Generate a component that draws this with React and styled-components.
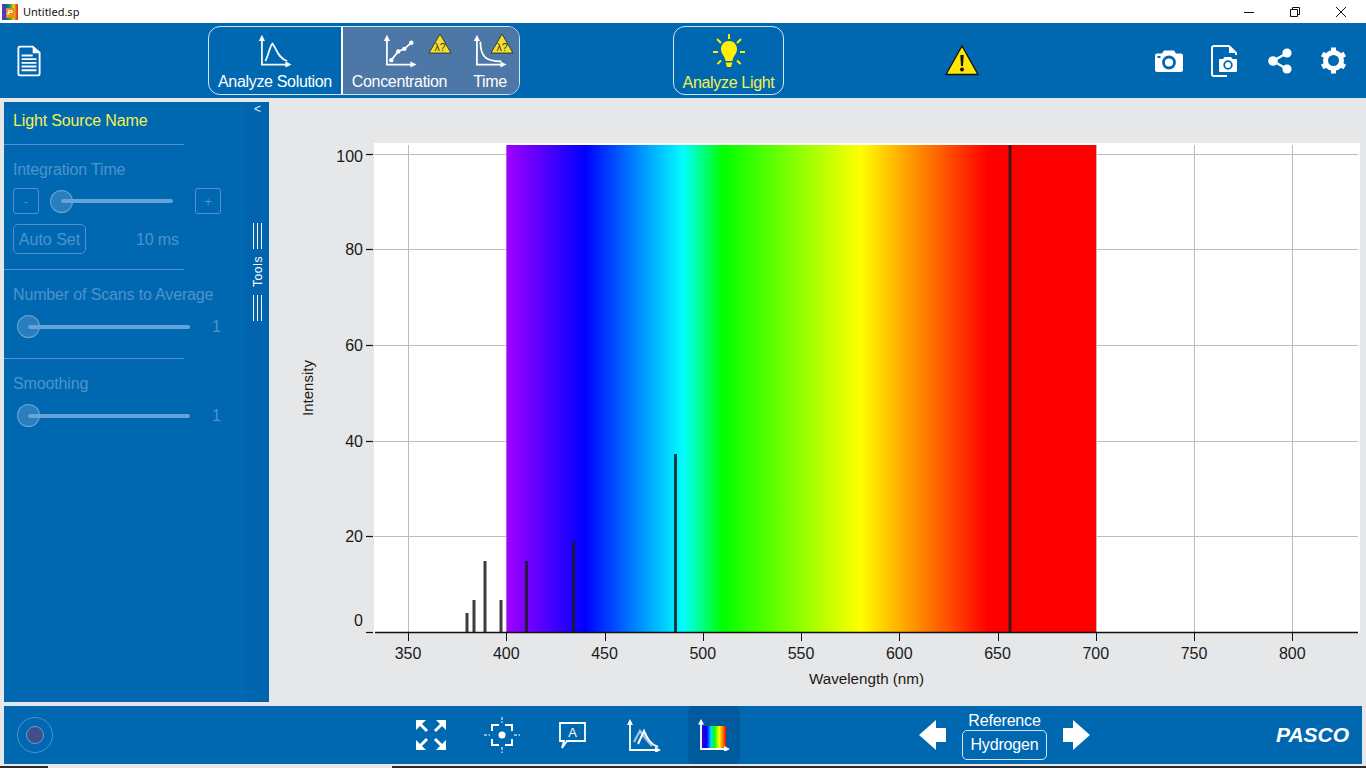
import styled, { createGlobalStyle } from "styled-components";

const BLUE = "#0067b1";
const DIM = "#4d94cc";
const FONT = `"Liberation Sans", Arial, sans-serif`;

const GlobalStyle = createGlobalStyle`
  html, body {
    margin: 0;
    height: 768px;
    overflow: hidden;
    background: #e6e7e8;
    font-family: ${FONT};
  }
`;

const Page = styled.div`
  width: 1366px;
  height: 768px;
  display: flex;
  flex-direction: column;
  overflow: hidden;
`;

/* window title bar */
const TitleBar = styled.div`
  height: 23px;
  flex: none;
  background: #fff;
  display: flex;
  align-items: center;
  padding-left: 2px;
`;
const AppIcon = styled.div`
  width: 16px;
  height: 16px;
  background: linear-gradient(90deg, #7a2fb0 0%, #2050c0 25%, #20a040 50%, #e8d020 72%, #e02020 100%);
  display: flex;
  align-items: center;
  justify-content: center;
`;
const AppIconLetter = styled.span`
  width: 8px;
  height: 10px;
  margin-top: 2px;
  background: #f08a10;
  color: #fff;
  font: italic bold 8px/10px ${FONT};
  text-align: center;
`;
const TitleText = styled.span`
  margin-left: 5px;
  font: 11px "Noto Sans", sans-serif;
  color: #111;
`;
const WindowControls = styled.div`
  margin-left: auto;
  margin-right: 2px;
  display: flex;
`;
const WindowButton = styled.div`
  width: 46px;
  height: 23px;
  display: flex;
  align-items: center;
  justify-content: center;
`;

/* top toolbar */
const TopBar = styled.div`
  height: 75px;
  flex: none;
  background: ${BLUE};
  display: flex;
  align-items: center;
  color: #fff;
`;
const DocButton = styled.div`
  width: 208px;
  padding-left: 17px;
  box-sizing: border-box;
  display: flex;
`;
const ModeGroup = styled.div`
  width: 312px;
  height: 69px;
  box-sizing: border-box;
  border: 1px solid #d5e4f1;
  border-radius: 12px;
  display: flex;
  overflow: hidden;
`;
const ModePart = styled.div`
  position: relative;
  display: flex;
  flex-direction: column;
  align-items: center;
  width: ${(p) => p.$w}px;
  padding-left: ${(p) => p.$pl || 0}px;
  box-sizing: border-box;
  flex: none;
  background: ${(p) => (p.$active ? "#4c77a6" : "transparent")};
`;
const ModeDivider = styled.div`
  width: 2px;
  flex: none;
  background: #fff;
`;
const ModeLabel = styled.span`
  font-size: 16px;
  letter-spacing: -0.33px;
  line-height: 18px;
  margin-top: ${(p) => p.$mt ?? 1}px;
  white-space: nowrap;
  color: ${(p) => p.$color || "#fff"};
`;
const ModeIcon = styled.div`
  height: 45px;
  box-sizing: border-box;
  padding-bottom: 4px;
  display: flex;
  align-items: flex-end;
`;
const BadgeSlot = styled.div`
  position: absolute;
  top: 6px;
  left: ${(p) => p.$left}px;
  display: flex;
`;
const LightButton = styled.div`
  margin-left: 153px;
  width: 111px;
  height: 69px;
  box-sizing: border-box;
  border: 1px solid #d5e4f1;
  border-radius: 12px;
  display: flex;
  flex-direction: column;
  align-items: center;
`;
const WarningSlot = styled.div`
  margin-left: 161px;
  width: 34px;
  display: flex;
`;
const ActionIcons = styled.div`
  margin-left: 176px;
  display: flex;
  align-items: center;
`;
const ActionSlot = styled.div`
  width: 28px;
  margin-right: ${(p) => p.$gap}px;
  display: flex;
  justify-content: center;
`;

/* middle */
const Main = styled.div`
  height: 608px;
  flex: none;
  display: flex;
`;
const Sidebar = styled.div`
  width: 265px;
  height: 600px;
  margin: 4px 0 0 4px;
  flex: none;
  background: ${BLUE};
  display: flex;
`;
const SidebarBody = styled.div`
  width: 242px;
  flex: none;
  display: flex;
  flex-direction: column;
`;
const SourceName = styled.div`
  height: 43px;
  box-sizing: border-box;
  padding: 10px 0 0 9px;
  font-size: 16px;
  letter-spacing: -0.15px;
  line-height: 18px;
  color: #f2f24d;
  border-bottom: 1px solid #4d94cc;
  width: 180px;
  white-space: nowrap;
`;
const Section = styled.div`
  width: 242px;
  box-sizing: border-box;
  padding: 16px 0 0 9px;
  height: ${(p) => p.$h}px;
`;
const SectionRule = styled.div`
  width: 180px;
  height: 1px;
  flex: none;
  background: #4d94cc;
`;
const SectionLabel = styled.div`
  font-size: 16px;
  letter-spacing: -0.15px;
  line-height: 18px;
  color: ${DIM};
  white-space: nowrap;
`;
const StepRow = styled.div`
  display: flex;
  align-items: center;
  margin-top: ${(p) => p.$mt || 0}px;
`;
const StepButton = styled.div`
  width: 26px;
  height: 26px;
  margin-left: ${(p) => p.$ml || 0}px;
  box-sizing: border-box;
  border: 1px solid ${DIM};
  border-radius: 3px;
  color: ${DIM};
  font-size: 13px;
  display: flex;
  align-items: center;
  justify-content: center;
  flex: none;
`;
const Slider = styled.div`
  display: flex;
  align-items: center;
  flex: none;
  width: ${(p) => p.$w}px;
  margin-left: ${(p) => p.$ml}px;
`;
const Thumb = styled.div`
  width: 23px;
  height: 23px;
  box-sizing: border-box;
  flex: none;
  border-radius: 50%;
  background: rgba(255, 255, 255, 0.16);
  border: 1px solid rgba(255, 255, 255, 0.3);
  margin-right: -12px;
`;
const Track = styled.div`
  flex: 1;
  height: 4px;
  border-radius: 2px;
  background: #66a3d6;
`;
const AutoSet = styled.div`
  width: 73px;
  height: 30px;
  box-sizing: border-box;
  padding-top: 2px;
  border: 1px solid ${DIM};
  border-radius: 5px;
  color: ${DIM};
  font-size: 16px;
  display: flex;
  align-items: center;
  justify-content: center;
`;
const ReadOut = styled.span`
  margin-left: ${(p) => p.$ml}px;
  padding-top: ${(p) => p.$pt || 0}px;
  color: ${DIM};
  font-size: 16px;
  letter-spacing: -0.15px;
  white-space: nowrap;
`;
const ToolsStrip = styled.div`
  width: 23px;
  flex: none;
  background: #0065ae;
  display: flex;
  flex-direction: column;
  align-items: center;
  color: #fff;
`;
const Collapse = styled.div`
  font-size: 12px;
  line-height: 12px;
  height: 121px;
  padding-top: 1px;
  box-sizing: border-box;
  color: #e6f0f8;
`;
const Grip = styled.div`
  width: 9px;
  height: 26px;
  flex: none;
  border-left: 1px solid #fff;
  border-right: 1px solid #fff;
  box-sizing: border-box;
  background: linear-gradient(#fff, #fff) center / 1px 100% no-repeat;
`;
const ToolsLabel = styled.div`
  writing-mode: vertical-rl;
  transform: rotate(180deg);
  font-size: 12px;
  line-height: 12px;
  letter-spacing: 0.6px;
  margin: 7px 0 8px;
`;
const ChartPane = styled.div`
  flex: 1;
  display: flex;
`;

/* bottom toolbar */
const BottomBar = styled.div`
  height: 58px;
  margin: 0 4px;
  flex: none;
  background: ${BLUE};
  display: flex;
  align-items: center;
  color: #fff;
`;
const RecordRing = styled.div`
  width: 36px;
  height: 36px;
  margin-left: 13px;
  box-sizing: border-box;
  border: 1px solid #4d94cc;
  border-radius: 50%;
  display: flex;
  align-items: center;
  justify-content: center;
  flex: none;
`;
const RecordDot = styled.div`
  width: 18px;
  height: 18px;
  box-sizing: border-box;
  border: 1px solid #6f9cc8;
  border-radius: 50%;
  background: #3f4f8c;
`;
const GraphTools = styled.div`
  margin-left: 342px;
  display: flex;
  align-items: center;
  height: 100%;
`;
const GraphTool = styled.div`
  width: 71px;
  height: 58px;
  flex: none;
  display: flex;
  align-items: center;
  justify-content: center;
`;
const ActiveTool = styled.div`
  width: 52px;
  height: 58px;
  margin-left: 9px;
  flex: none;
  display: flex;
  align-items: center;
  justify-content: center;
  border-radius: 5px;
  background: #005a9e;
`;
const ReferenceNav = styled.div`
  margin-left: 179px;
  display: flex;
  align-items: center;
`;
const ReferenceBox = styled.div`
  margin: 0 16px;
  display: flex;
  flex-direction: column;
  align-items: center;
`;
const ReferenceTitle = styled.div`
  font-size: 16px;
  letter-spacing: -0.15px;
  line-height: 18px;
  margin-top: 1px;
`;
const ReferenceValue = styled.div`
  width: 85px;
  height: 30px;
  box-sizing: border-box;
  border: 1px solid #d5e4f1;
  border-radius: 5px;
  font-size: 16px;
  letter-spacing: -0.15px;
  display: flex;
  align-items: center;
  justify-content: center;
`;
const Brand = styled.div`
  margin-left: 186px;
  font: italic bold 21px ${FONT};
`;
const BottomEdge = styled.div`
  flex: none;
  height: 4px;
  display: flex;
  align-items: flex-end;
`;
const TaskStrip = styled.div`
  height: 2px;
  width: ${(p) => p.$w}px;
  flex: ${(p) => (p.$grow ? 1 : "none")};
  background: ${(p) => p.$color};
`;

/* icons */
const Svg = ({ w, h, box, children }) => (
  <svg width={w} height={h} viewBox={box || `0 0 ${w} ${h}`} fill="none">
    {children}
  </svg>
);

const Axes = ({ c = "#fff" }) => (
  <g stroke={c} strokeWidth="2" fill={c}>
    <path d="M4 6V35H34" fill="none" />
    <path d="M4 1L0.5 8H7.5Z" stroke="none" />
    <path d="M38 35L31 31.5V38.5Z" stroke="none" />
  </g>
);

const LambdaBadge = () => (
  <svg width="24" height="21" viewBox="0 0 24 21">
    <path d="M12 1L23 20H1Z" fill="#f5df2e" stroke="#222" strokeWidth="0.8" />
    <text x="12" y="18" textAnchor="middle" fontSize="10.5" fill="#333" fontFamily="Liberation Sans">
      λ?
    </text>
  </svg>
);

const DocIcon = () => (
  <Svg w={24} h={32} box="0 0 26 34">
    <path d="M3 1.5H17L24.5 8V31a1.5 1.5 0 0 1-1.5 1.5H3A1.5 1.5 0 0 1 1.5 31V3A1.5 1.5 0 0 1 3 1.5Z" stroke="#fff" strokeWidth="2" />
    <path d="M17 2V8.5H24Z" fill="#fff" />
    <path d="M5 11H17M5 15H21M5 19H21M5 23H21M5 27H21" stroke="#fff" strokeWidth="2" />
  </Svg>
);

const PeakIcon = () => (
  <Svg w={34} h={34} box="0 0 38 39">
    <Axes />
    <path d="M8 31C11 26 13 14 16 11C20 15 22 28 33 31" stroke="#fff" strokeWidth="2" />
  </Svg>
);
const LineIcon = () => (
  <Svg w={34} h={34} box="0 0 38 39">
    <Axes />
    <path d="M9 30L17 20L24 17L32 10" stroke="#fff" strokeWidth="2" />
    <g fill="#fff">
      <circle cx="9" cy="30" r="2.5" />
      <circle cx="17" cy="20" r="2.5" />
      <circle cx="24" cy="17" r="2.5" />
      <circle cx="32" cy="10" r="2.5" />
    </g>
  </Svg>
);
const DecayIcon = () => (
  <Svg w={34} h={34} box="0 0 38 39">
    <Axes />
    <path d="M8 9C8 26 14 31 32 31.5" stroke="#fff" strokeWidth="2" />
  </Svg>
);

const BulbIcon = () => (
  <Svg w={32} h={34}>
    <g stroke="#ffef00" strokeWidth="2">
      <path d="M16 0V5M4 5L8 9M28 5L24 9M0 18H5M27 18H32M4.5 30L8 26.5M27.5 30L24 26.5" />
    </g>
    <path d="M16 7C10 7 8 12 8 15C8 20 12 22 12.5 27H19.5C20 22 24 20 24 15C24 12 22 7 16 7Z" fill="#ffef00" />
    <path d="M12.5 28.5H19.5L18 33H14Z" fill="#ffef00" />
  </Svg>
);

const WarningIcon = () => (
  <Svg w={34} h={31}>
    <path d="M17 1L33 29.5H1Z" fill="#ffe600" stroke="#111" strokeWidth="1.3" />
    <path d="M15.3 10H18.7L18 21H16Z" fill="#111" />
    <circle cx="17" cy="24.5" r="2" fill="#111" />
  </Svg>
);

const CameraIcon = () => (
  <Svg w={28} h={22}>
    <path d="M2 3.5H7L9 0.5H19L21 3.5H26a2 2 0 0 1 2 2V20a2 2 0 0 1-2 2H2a2 2 0 0 1-2-2V5.5a2 2 0 0 1 2-2Z" fill="#fff" />
    <circle cx="14" cy="12.5" r="5.5" stroke={BLUE} strokeWidth="2.8" />
    <rect x="2.5" y="6" width="3" height="2" fill={BLUE} />
  </Svg>
);
const DocCameraIcon = () => (
  <Svg w={27} h={32}>
    <path d="M18 1H3a2 2 0 0 0-2 2V29a2 2 0 0 0 2 2H16M18 1L25 8V10" stroke="#fff" strokeWidth="2" />
    <path d="M18 1V8H25Z" fill="#fff" />
    <path d="M9 14H12L13.5 12H20L21.5 14H25a1 1 0 0 1 1 1V26a1 1 0 0 1-1 1H9a1 1 0 0 1-1-1V15a1 1 0 0 1 1-1Z" fill="#fff" />
    <circle cx="17" cy="20" r="3.8" stroke={BLUE} strokeWidth="1.8" />
  </Svg>
);
const ShareIcon = () => (
  <Svg w={24} h={26}>
    <path d="M19 5L5 13L19 21" stroke="#fff" strokeWidth="2.4" />
    <circle cx="19" cy="5" r="4.6" fill="#fff" />
    <circle cx="5" cy="13" r="4.8" fill="#fff" />
    <circle cx="19" cy="21" r="4.6" fill="#fff" />
  </Svg>
);
const GearIcon = () => (
  <Svg w={27} h={27}>
    <circle cx="13.5" cy="13.5" r="8" stroke="#fff" strokeWidth="5" />
    <g stroke="#fff" strokeWidth="5">
      {[0, 60, 120].map((a) => (
        <path key={a} d="M13.5 0.5V6M13.5 21V26.5" transform={`rotate(${a} 13.5 13.5)`} />
      ))}
    </g>
  </Svg>
);

const ExpandIcon = () => (
  <Svg w={30} h={30}>
    <g stroke="#fff" strokeWidth="3">
      <path d="M3 3L11 11M27 3L19 11M3 27L11 19M27 27L19 19" />
    </g>
    <g fill="#fff">
      <path d="M0 0H10L0 10Z" />
      <path d="M30 0H20L30 10Z" />
      <path d="M0 30H10L0 20Z" />
      <path d="M30 30H20L30 20Z" />
    </g>
  </Svg>
);
const TargetIcon = () => (
  <Svg w={36} h={36}>
    <path d="M18 0V6M18 30V36M0 18H6M30 18H36" stroke="#8fb9dd" strokeWidth="2" strokeDasharray="3 1.5" />
    <path d="M8 14V8H15M21 8H28V14M28 22V28H21M15 28H8V22" stroke="#fff" strokeWidth="2" />
    <circle cx="18" cy="18" r="3.5" fill="#fff" />
  </Svg>
);
const LabelIcon = () => (
  <Svg w={27} h={27}>
    <path d="M1 1H26V19H8L3 26L5 19H1Z" stroke="#fff" strokeWidth="1.8" />
    <text x="13.5" y="15" textAnchor="middle" fontSize="13" fill="#fff" fontFamily="Liberation Sans">
      A
    </text>
  </Svg>
);
const MultiPeakIcon = () => (
  <Svg w={34} h={33}>
    <path d="M3 5V31H30" stroke="#fff" strokeWidth="1.8" />
    <path d="M3 0L0 6H6Z" fill="#fff" />
    <path d="M34 31L28 28V34Z" fill="#fff" />
    <path d="M7 23L13 12L19 20L25 27" stroke="#9fc0de" strokeWidth="2.4" />
    <path d="M11 25L17 12C20 19 23 25 31 28" stroke="#fff" strokeWidth="2" />
  </Svg>
);
const SpectrumIcon = () => (
  <Svg w={32} h={32}>
    <defs>
      <linearGradient id="miniSpectrum">
        <stop offset="0" stopColor="#3000d0" />
        <stop offset="0.2" stopColor="#0000ff" />
        <stop offset="0.38" stopColor="#00e0ff" />
        <stop offset="0.52" stopColor="#00ff00" />
        <stop offset="0.72" stopColor="#ffff00" />
        <stop offset="1" stopColor="#ff0000" />
      </linearGradient>
    </defs>
    <rect x="4" y="7" width="24" height="22" fill="url(#miniSpectrum)" />
    <path d="M3 4V30H28" stroke="#fff" strokeWidth="1.8" />
    <path d="M3 0L0 5.5H6Z" fill="#fff" />
    <path d="M32 30L26 27V33Z" fill="#fff" />
  </Svg>
);
const LeftArrow = () => (
  <Svg w={27} h={30}>
    <path d="M0 15L17 0V8H27V22H17V30Z" fill="#fff" />
  </Svg>
);
const RightArrow = () => (
  <Svg w={27} h={30}>
    <path d="M27 15L10 0V8H0V22H10V30Z" fill="#fff" />
  </Svg>
);

/* chart, drawn in page coordinates */
const xOf = (nm) => 408 + (nm - 350) * 1.965;
const xTicks = [350, 400, 450, 500, 550, 600, 650, 700, 750, 800];
const yTicks = [
  { v: 100, y: 154.5, label: 162 },
  { v: 80, y: 249.5, label: 255 },
  { v: 60, y: 345.5, label: 351 },
  { v: 40, y: 441.5, label: 447 },
  { v: 20, y: 536.5, label: 542 },
  { v: 0, y: 632, label: 626 },
];
const hydrogenLines = [
  { x: 467, top: 613 },
  { x: 474, top: 600 },
  { x: 485, top: 561 },
  { x: 501, top: 600 },
  { x: 526.5, top: 561 },
  { x: 573.5, top: 541 },
  { x: 675.5, top: 454 },
  { x: 1010, top: 145 },
];
const spectrumStops = [
  [400, "#a000ff"],
  [440, "#0000ff"],
  [490, "#00ffff"],
  [510, "#00ff00"],
  [580, "#ffff00"],
  [645, "#ff0000"],
  [700, "#ff0000"],
];

const ChartText = styled.text`
  font-family: ${FONT};
  fill: #1a1a1a;
  font-size: ${(p) => p.$size || 16}px;
`;

const SpectrumChart = () => (
  <svg width="1097" height="608" viewBox="269 98 1097 608">
    <defs>
      <linearGradient id="spectrum">
        {spectrumStops.map(([nm, color]) => (
          <stop key={nm} offset={(nm - 400) / 300} stopColor={color} />
        ))}
      </linearGradient>
    </defs>
    <rect x="374" y="143" width="986" height="490" fill="#fff" />
    {yTicks.map((t) =>
      t.v > 0 ? <path key={t.v} d={`M374 ${t.y}H1358`} stroke="#bdbdbd" /> : null
    )}
    {xTicks.map((nm) => (
      <path key={nm} d={`M${Math.round(xOf(nm)) + 0.5} 145V633`} stroke="#bdbdbd" />
    ))}
    <rect x="506.5" y="145" width="589.5" height="488" fill="url(#spectrum)" />
    {hydrogenLines.map((l) => (
      <rect key={l.x} x={l.x - 1.5} y={l.top} width="3" height={633 - l.top} fill="#1c1c1c" fillOpacity="0.85" />
    ))}
    <path d="M375 632.5H1358" stroke="#111" strokeWidth="1.5" />
    {yTicks.map((t) => (
      <g key={t.v}>
        <path d={`M366 ${t.y === 632 ? 632.5 : t.y}H373`} stroke="#111" strokeWidth="1.2" />
        <ChartText x="363" y={t.label} textAnchor="end">
          {t.v}
        </ChartText>
      </g>
    ))}
    {xTicks.map((nm) => (
      <g key={nm}>
        <path d={`M${Math.round(xOf(nm)) + 0.5} 633V641`} stroke="#111" />
        <ChartText x={xOf(nm)} y="659" textAnchor="middle">
          {nm}
        </ChartText>
      </g>
    ))}
    <ChartText x="866.5" y="684" textAnchor="middle" $size={15.2}>
      Wavelength (nm)
    </ChartText>
    <ChartText x="0" y="0" textAnchor="middle" $size={15} transform="translate(313 388) rotate(-90)">
      Intensity
    </ChartText>
  </svg>
);

const WinMin = () => (
  <Svg w={12} h={12}>
    <path d="M1 6.5H11" stroke="#111" />
  </Svg>
);
const WinRestore = () => (
  <Svg w={12} h={12}>
    <path d="M1.5 3.5H8.5V10.5H1.5ZM3.5 3V1.5H10.5V8.5H9" stroke="#111" />
  </Svg>
);
const WinClose = () => (
  <Svg w={12} h={12}>
    <path d="M1 1L11 11M11 1L1 11" stroke="#111" />
  </Svg>
);

export default function App() {
  return (
    <Page>
      <GlobalStyle />
      <TitleBar>
        <AppIcon>
          <AppIconLetter>P</AppIconLetter>
        </AppIcon>
        <TitleText>Untitled.sp</TitleText>
        <WindowControls>
          <WindowButton>
            <WinMin />
          </WindowButton>
          <WindowButton>
            <WinRestore />
          </WindowButton>
          <WindowButton>
            <WinClose />
          </WindowButton>
        </WindowControls>
      </TitleBar>

      <TopBar>
        <DocButton>
          <DocIcon />
        </DocButton>
        <ModeGroup>
          <ModePart $w={132}>
            <ModeIcon>
              <PeakIcon />
            </ModeIcon>
            <ModeLabel>Analyze Solution</ModeLabel>
          </ModePart>
          <ModeDivider />
          <ModePart $w={113} $active>
            <ModeIcon>
              <LineIcon />
            </ModeIcon>
            <ModeLabel>Concentration</ModeLabel>
            <BadgeSlot $left={85}>
              <LambdaBadge />
            </BadgeSlot>
          </ModePart>
          <ModePart $w={63} $pl={5} $active>
            <ModeIcon>
              <DecayIcon />
            </ModeIcon>
            <ModeLabel>Time</ModeLabel>
            <BadgeSlot $left={34}>
              <LambdaBadge />
            </BadgeSlot>
          </ModePart>
        </ModeGroup>
        <LightButton>
          <ModeIcon>
            <BulbIcon />
          </ModeIcon>
          <ModeLabel $color="#f2f24d" $mt={2}>
            Analyze Light
          </ModeLabel>
        </LightButton>
        <WarningSlot>
          <WarningIcon />
        </WarningSlot>
        <ActionIcons>
          <ActionSlot $gap={27}>
            <CameraIcon />
          </ActionSlot>
          <ActionSlot $gap={28}>
            <DocCameraIcon />
          </ActionSlot>
          <ActionSlot $gap={25}>
            <ShareIcon />
          </ActionSlot>
          <ActionSlot $gap={0}>
            <GearIcon />
          </ActionSlot>
        </ActionIcons>
      </TopBar>

      <Main>
        <Sidebar>
          <SidebarBody>
            <SourceName>Light Source Name</SourceName>
            <Section $h={124}>
              <SectionLabel>Integration Time</SectionLabel>
              <StepRow $mt={9}>
                <StepButton>-</StepButton>
                <Slider $w={123} $ml={11}>
                  <Thumb />
                  <Track />
                </Slider>
                <StepButton $ml={22}>+</StepButton>
              </StepRow>
              <StepRow $mt={10}>
                <AutoSet>Auto Set</AutoSet>
                <ReadOut $ml={50} $pt={2}>
                  10 ms
                </ReadOut>
              </StepRow>
            </Section>
            <SectionRule />
            <Section $h={88}>
              <SectionLabel>Number of Scans to Average</SectionLabel>
              <StepRow $mt={11}>
                <Slider $w={173} $ml={4}>
                  <Thumb />
                  <Track />
                </Slider>
                <ReadOut $ml={22}>1</ReadOut>
              </StepRow>
            </Section>
            <SectionRule />
            <Section $h={88}>
              <SectionLabel>Smoothing</SectionLabel>
              <StepRow $mt={11}>
                <Slider $w={173} $ml={4}>
                  <Thumb />
                  <Track />
                </Slider>
                <ReadOut $ml={22}>1</ReadOut>
              </StepRow>
            </Section>
          </SidebarBody>
          <ToolsStrip>
            <Collapse>&lt;</Collapse>
            <Grip />
            <ToolsLabel>Tools</ToolsLabel>
            <Grip />
          </ToolsStrip>
        </Sidebar>
        <ChartPane>
          <SpectrumChart />
        </ChartPane>
      </Main>

      <BottomBar>
        <RecordRing>
          <RecordDot />
        </RecordRing>
        <GraphTools>
          <GraphTool>
            <ExpandIcon />
          </GraphTool>
          <GraphTool>
            <TargetIcon />
          </GraphTool>
          <GraphTool>
            <LabelIcon />
          </GraphTool>
          <GraphTool>
            <MultiPeakIcon />
          </GraphTool>
          <ActiveTool>
            <SpectrumIcon />
          </ActiveTool>
        </GraphTools>
        <ReferenceNav>
          <LeftArrow />
          <ReferenceBox>
            <ReferenceTitle>Reference</ReferenceTitle>
            <ReferenceValue>Hydrogen</ReferenceValue>
          </ReferenceBox>
          <RightArrow />
        </ReferenceNav>
        <Brand>PASCO</Brand>
      </BottomBar>
      <BottomEdge>
        <TaskStrip $w={48} $color="#2b2b2b" />
        <TaskStrip $w={344} $color="#e6e7e8" />
        <TaskStrip $grow $color="#2b2b2b" />
      </BottomEdge>
    </Page>
  );
}
